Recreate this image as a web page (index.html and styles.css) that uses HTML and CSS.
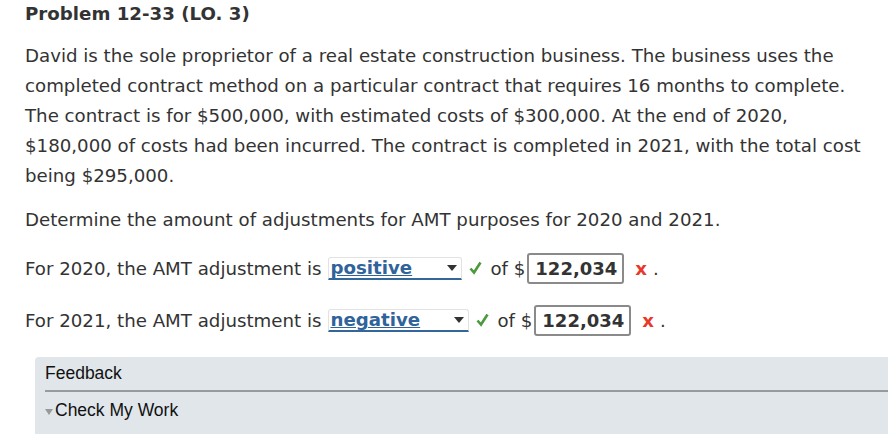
FILE: index.html
```html
<!DOCTYPE html>
<html>
<head>
<meta charset="utf-8">
<link rel="stylesheet" href="styles.css">
</head>
<body>
<div class="problem">
  <h1 class="title">Problem 12-33 (LO. 3)</h1>
  <p class="para">David is the sole proprietor of a real estate construction business. The business uses the completed contract method on a particular contract that requires 16 months to complete. The contract is for $500,000, with estimated costs of $300,000. At the end of 2020, $180,000 of costs had been incurred. The contract is completed in 2021, with the total cost being $295,000.</p>
  <p class="para q">Determine the amount of adjustments for AMT purposes for 2020 and 2021.</p>
  <div class="answer row1">
    <span>For 2020, the AMT adjustment is</span>
    <span class="select sel1"><span class="sel-text">positive</span><span class="arrow"></span></span>
    <svg class="check" width="13" height="14" viewBox="0 0 13 14"><path d="M1.5 7.5 L5 11.5 L11.5 1.5" fill="none" stroke="#4b9a3c" stroke-width="2.6"/></svg>
    <span class="of">of $</span>
    <span class="num">122,034</span>
    <span class="wrong">x</span>
    <span class="dot">.</span>
  </div>
  <div class="answer row2">
    <span>For 2021, the AMT adjustment is</span>
    <span class="select sel2"><span class="sel-text">negative</span><span class="arrow"></span></span>
    <svg class="check" width="13" height="14" viewBox="0 0 13 14"><path d="M1.5 7.5 L5 11.5 L11.5 1.5" fill="none" stroke="#4b9a3c" stroke-width="2.6"/></svg>
    <span class="of">of $</span>
    <span class="num">122,034</span>
    <span class="wrong">x</span>
    <span class="dot">.</span>
  </div>
</div>
<div class="feedback">
  <div class="fb-head">Feedback</div>
  <div class="fb-body"><span class="tri"></span>Check My Work</div>
</div>
</body>
</html>
```

FILE: styles.css
```css
html, body {
  margin: 0;
  padding: 0;
  background: #fff;
}
body {
  font-family: "DejaVu Sans", Verdana, sans-serif;
  color: #333;
  font-size: 18.2px;
}
.problem {
  padding-left: 25px;
}
.title {
  margin: 0;
  padding-top: 3px;
  font-size: 18.2px;
  line-height: 22px;
  font-weight: bold;
  color: #333;
}
.para {
  margin: 16px 0 0 0;
  line-height: 30px;
  width: 850px;
}
.q {
  margin-top: 14px;
}
.answer {
  display: flex;
  align-items: center;
  white-space: nowrap;
}
.row1 {
  margin-top: 17px;
  height: 32px;
}
.row2 {
  margin-top: 20px;
  height: 32px;
}
.select {
  display: inline-flex;
  align-items: center;
  justify-content: space-between;
  height: 23px;
  margin-left: 7px;
  border: 1px solid #e2e2e2;
  border-bottom: 2px solid #336699;
  border-radius: 3px 3px 0 0;
  box-sizing: border-box;
  padding: 0 4px 0 1px;
}
.sel1 { width: 134px; }
.sel2 { width: 141px; }
.sel-text {
  color: #2f6399;
  font-weight: bold;
  text-decoration: underline;
  line-height: 19px;
}
.arrow {
  width: 0;
  height: 0;
  border-left: 5px solid transparent;
  border-right: 5px solid transparent;
  border-top: 6px solid #333;
}
.check {
  margin-left: 7px;
}
.of {
  margin-left: 8px;
}
.num {
  display: inline-block;
  margin-left: 2px;
  border: 2px solid #8a8a8a;
  border-radius: 3px;
  box-sizing: border-box;
  width: 97px;
  height: 31px;
  line-height: 27px;
  padding-left: 6px;
  font-weight: bold;
  font-size: 18px;
}
.wrong {
  color: #e8382b;
  font-weight: bold;
  margin-left: 11px;
}
.dot {
  margin-left: 6px;
}
.feedback {
  margin-top: 21px;
  margin-left: 35px;
  background: #e0e6e9;
  border-top-left-radius: 4px;
  padding-left: 10px;
  height: 80px;
  font-family: "Liberation Sans", Arial, Helvetica, sans-serif;
  color: #111;
  font-size: 17.5px;
}
.fb-head {
  padding-top: 5px;
  height: 28px;
  line-height: 22px;
  border-bottom: 2px solid #979b9e;
}
.fb-body {
  display: flex;
  align-items: center;
  height: 37px;
}
.tri {
  display: inline-block;
  width: 0;
  height: 0;
  border-left: 4px solid transparent;
  border-right: 4px solid transparent;
  border-top: 6px solid #999;
  margin-right: 2px;
  margin-top: 2px;
}
```
